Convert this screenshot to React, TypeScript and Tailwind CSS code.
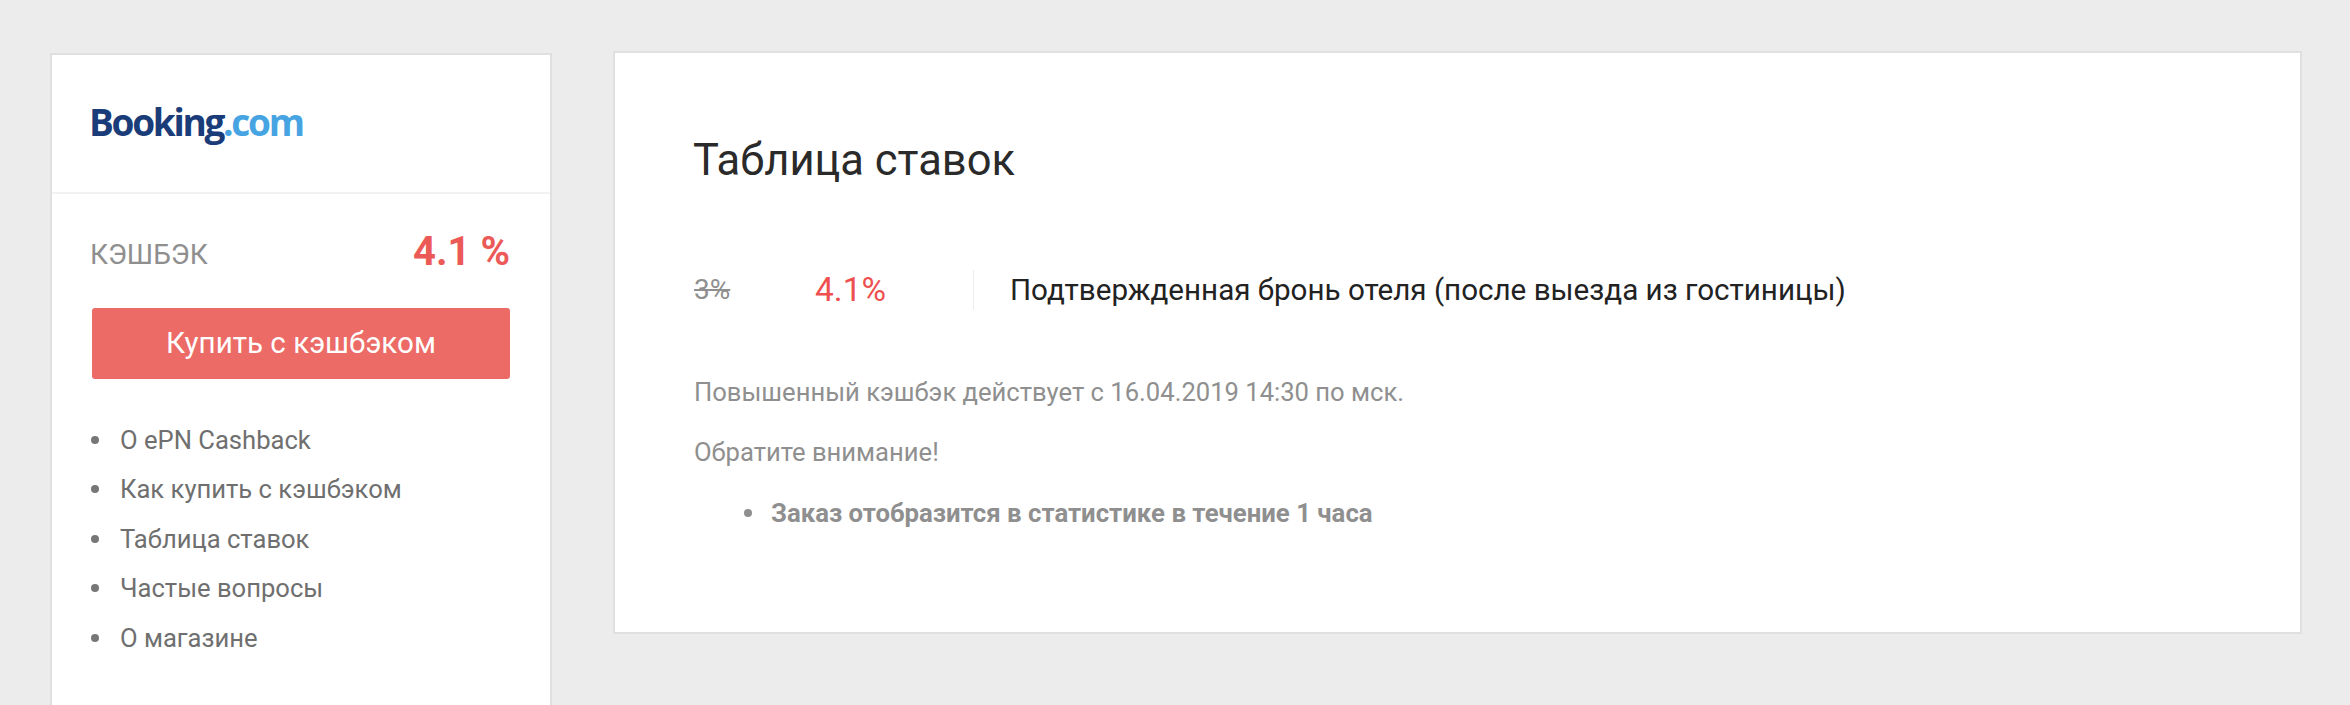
const NAV = ['О ePN Cashback', 'Как купить с кэшбэком', 'Таблица ставок', 'Частые вопросы', 'О магазине'];

export default function App() {
  return (
    <div className="h-[705px] overflow-hidden bg-[#ececec] font-['Roboto',sans-serif]">
      <div className="flex items-start gap-[61px] pl-[50px] pr-[48px] pt-[51px]">
        {/* Sidebar */}
        <aside className="mt-[2px] h-[700px] w-[502px] shrink-0 border-2 border-[#e0e0e0] bg-white">
          <div className="flex h-[139px] items-center border-b-2 border-[#f2f2f2] pb-[5px] pl-[37px]">
            <span className="font-['Open_Sans',sans-serif] text-[37px] leading-none font-bold tracking-[-2.3px] text-[#1a3c78]">
              Booking<span className="text-[#47a4e2]">.com</span>
            </span>
          </div>
          <div className="px-[40px]">
            <div className="mt-[38px] flex items-center justify-between">
              <span className="mt-[5px] -ml-[2px] text-[28px] leading-[32px] text-[#8f8f8f]">КЭШБЭК</span>
              <span className="text-[40px] leading-[40px] font-bold text-[#ec5a58]">4.1 %</span>
            </div>
            <button className="mt-[36px] h-[71px] w-full rounded-[3px] bg-[#ec6b66] text-[29.6px] text-white">
              Купить с кэшбэком
            </button>
            <ul className="mt-[36px]">
              {NAV.map((item) => (
                <li key={item} className="-ml-[1px] flex h-[49.5px] items-center gap-[21px] text-[25.6px] text-[#6f6f6f]">
                  <span className="h-[8px] w-[8px] rounded-full bg-[#777777]" />
                  {item}
                </li>
              ))}
            </ul>
          </div>
        </aside>

        {/* Rates table */}
        <main className="h-[583px] flex-1 border-2 border-[#e0e0e0] bg-white pt-[84px] pl-[79px]">
          <h1 className="-ml-[1px] text-[43.5px] leading-[48px] text-[#2a2a2a]">Таблица ставок</h1>
          <div className="mt-[85px] flex h-[40px] items-center text-[29.6px]">
            <span className="w-[121px] text-[28px] text-[#8f8f8f] line-through">3%</span>
            <span className="w-[158px] text-[33.5px] text-[#ee4f4f]">4.1%</span>
            <span className="h-[40px] w-[1px] bg-[#eeeeee]" />
            <span className="pl-[36px] text-[#222222]">Подтвержденная бронь отеля (после выезда из гостиницы)</span>
          </div>
          <p className="mt-[66px] text-[25.6px] leading-[32px] text-[#8f8f8f]">
            Повышенный кэшбэк действует с 16.04.2019 14:30 по мск.
          </p>
          <p className="mt-[28px] text-[25.6px] leading-[32px] text-[#8f8f8f]">Обратите внимание!</p>
          <ul className="mt-[29px] pl-[50px]">
            <li className="flex items-center gap-[19px] text-[25.75px] leading-[32px] font-bold text-[#8f8f8f]">
              <span className="h-[8px] w-[8px] rounded-full bg-[#8f8f8f]" />
              Заказ отобразится в статистике в течение 1 часа
            </li>
          </ul>
        </main>
      </div>
    </div>
  );
}
